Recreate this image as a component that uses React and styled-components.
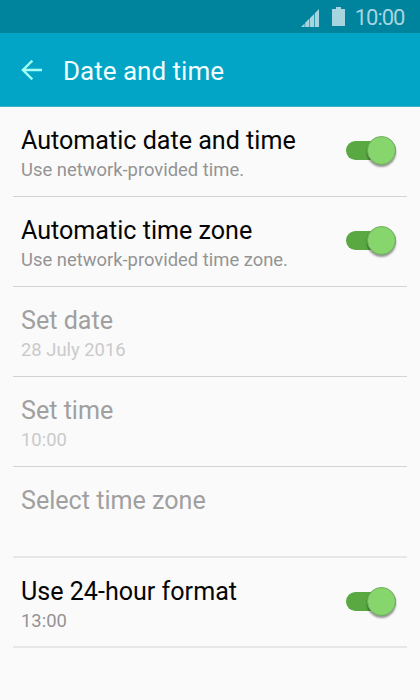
import React from 'react'
import styled, { createGlobalStyle, ThemeProvider } from 'styled-components'

const theme = {
  colors: {
    status: '#00839d',
    header: '#02a5c6',
    page: '#fafafa',
    arrow: '#a3fff4',
    statusIcon: '#a6d5df',
    divider: '#d2d4d4',
    softDivider: '#e6e7e7',
    track: '#5aa842',
    thumb: '#87d66d',
  },
}

const GlobalStyle = createGlobalStyle`
  body {
    margin: 0;
    background: #fafafa;
    font-family: Roboto, sans-serif;
  }
`

const Screen = styled.div`
  display: flex;
  flex-direction: column;
  width: 420px;
  height: 700px;
  overflow: hidden;
  background: ${props => props.theme.colors.page};
`

const StatusBar = styled.div`
  display: flex;
  flex: none;
  align-items: flex-start;
  justify-content: flex-end;
  height: 33px;
  padding-right: 15.5px;
  box-sizing: border-box;
  color: ${props => props.theme.colors.statusIcon};
  background: ${props => props.theme.colors.status};
`

const StatusIcon = styled.svg`
  display: block;
  margin-top: ${props => props.$top}px;
  margin-right: ${props => props.$gap}px;
  fill: currentColor;
`

const Clock = styled.span`
  font-size: 22px;
  line-height: 26px;
  letter-spacing: -1px;
  padding-top: 5px;
`

const Header = styled.header`
  display: flex;
  flex: none;
  align-items: center;
  height: 74px;
  padding: 0 21px;
  box-sizing: border-box;
  border-bottom: 1px solid #3cb2ca;
  background: ${props => props.theme.colors.header};
`

const BackArrow = styled.svg`
  display: block;
  margin-right: 21px;
  fill: none;
  stroke: ${props => props.theme.colors.arrow};
  stroke-width: 2.4;
`

const Heading = styled.h1`
  margin: 0;
  padding-top: 2px;
  font-size: 26px;
  line-height: 30px;
  font-weight: 400;
  color: #f3fdff;
`

const List = styled.ul`
  list-style: none;
  margin: 0;
  padding: 0 13px;
`

const softBorder = props => props.$soft ? ({
  borderBottom: `2px solid ${props.theme.colors.softDivider}`
}) : null

const Item = styled.li`
  display: flex;
  justify-content: space-between;
  height: ${props => props.$tall ? 91 : 90}px;
  padding: 19px 11.5px 0 8px;
  box-sizing: border-box;
  border-bottom: 1px solid ${props => props.theme.colors.divider};
  ${softBorder}
`

const Title = styled.div`
  font-size: 25.1px;
  line-height: 30px;
  white-space: nowrap;
  color: ${props => props.$disabled ? '#a0a0a0' : '#050505'};
`

const Summary = styled.div`
  margin-top: 3px;
  font-size: 18.4px;
  line-height: 22px;
  white-space: nowrap;
  color: ${props => props.$disabled ? '#cacaca' : '#949494'};
`

const Track = styled.div`
  display: flex;
  align-items: center;
  justify-content: flex-end;
  width: 50px;
  height: 19px;
  margin-top: 15px;
  border-radius: 10px;
  background: ${props => props.theme.colors.track};
`

const Thumb = styled.div`
  flex: none;
  width: 29px;
  height: 29px;
  border-radius: 50%;
  box-sizing: border-box;
  border: 1px solid #6fae5c;
  background: ${props => props.theme.colors.thumb};
  box-shadow: 0 2px 2px rgba(0, 0, 0, 0.4);
`

const Switch = () => (
  <Track>
    <Thumb />
  </Track>
)

const settings = [
  { title: 'Automatic date and time', summary: 'Use network-provided time.', on: true },
  { title: 'Automatic time zone', summary: 'Use network-provided time zone.', on: true },
  { title: 'Set date', summary: '28 July 2016', disabled: true },
  { title: 'Set time', summary: '10:00', disabled: true },
  { title: 'Select time zone', disabled: true, soft: true, tall: true },
  { title: 'Use 24-hour format', summary: '13:00', on: true, soft: true },
]

const Signal = () => (
  <StatusIcon $top={8.5} $gap={13} width="18" height="18" viewBox="0 0 18 18">
    <path d="M0 18 L3.6 14.4 V18Z M4.2 13.8 L8.2 9.8 V18 H4.2Z M8.8 9.2 L13.1 4.9 V18 H8.8Z M13.8 4.2 L18 0 V18 H13.8Z" />
  </StatusIcon>
)

const Battery = () => (
  <StatusIcon $top={7} $gap={9.5} width="13" height="19" viewBox="0 0 13 19">
    <path d="M4 0 H9 V2 H13 V19 H0 V2 H4Z" />
  </StatusIcon>
)

const Setting = ({ title, summary, on, disabled, soft, tall }) => (
  <Item $soft={soft} $tall={tall}>
    <div>
      <Title $disabled={disabled}>{title}</Title>
      {summary && <Summary $disabled={disabled}>{summary}</Summary>}
    </div>
    {on && <Switch />}
  </Item>
)

const App = () => (
  <ThemeProvider theme={theme}>
    <GlobalStyle />
    <Screen>
      <StatusBar>
        <Signal />
        <Battery />
        <Clock>10:00</Clock>
      </StatusBar>
      <Header>
        <BackArrow width="21" height="20" viewBox="0 0 21 20">
          <path d="M21 10 H1.5 M11.3 0.7 L1.9 10 L11.3 19.3" />
        </BackArrow>
        <Heading>Date and time</Heading>
      </Header>
      <List>
        {settings.map(setting => <Setting key={setting.title} {...setting} />)}
      </List>
    </Screen>
  </ThemeProvider>
)

export default App
